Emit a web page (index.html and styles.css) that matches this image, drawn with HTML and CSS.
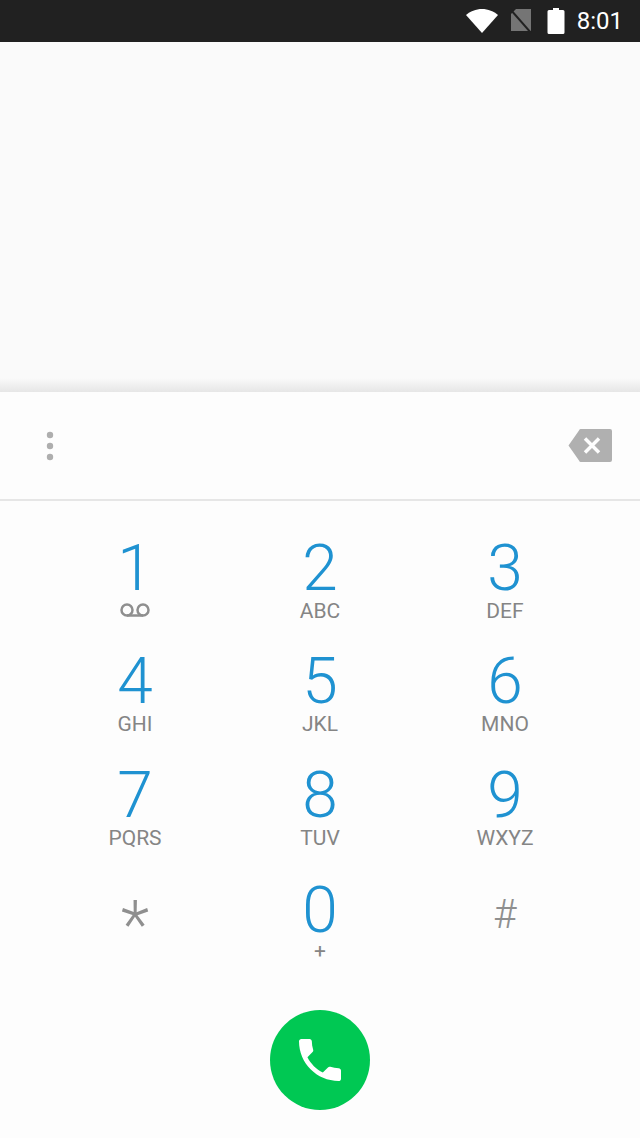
FILE: index.html
```html
<!DOCTYPE html>
<html lang="en">
<head>
<meta charset="utf-8">
<title>Dialer</title>
<link rel="stylesheet" href="styles.css">
</head>
<body>
<div class="phone">
  <header class="status">
    <svg class="ic-wifi" viewBox="0 0 32 24"><path d="M0 6C4 2.500 10 0 16 0s12 2.500 16 6L16 24z" fill="#fff"/></svg>
    <svg class="ic-sim" viewBox="0 0 22 26"><path d="M6 1h15v22H1V6z" fill="#757575"/><path d="M0 1l22 25" stroke="#212121" stroke-width="2"/></svg>
    <svg class="ic-batt" viewBox="0 0 18 26"><path d="M6 0h6v2h4a1.500 1.500 0 0 1 1.500 1.500V24.500A1.500 1.500 0 0 1 16 26H2a1.500 1.500 0 0 1-1.500-1.500V3.500A1.500 1.500 0 0 1 2 2h4z" fill="#fff"/></svg>
    <span class="clock">8:01</span>
  </header>
  <div class="results"></div>
  <section class="sheet">
    <div class="entry">
      <svg class="ic-more" viewBox="0 0 8 30"><circle cx="4" cy="4" r="3.200"/><circle cx="4" cy="15" r="3.200"/><circle cx="4" cy="26" r="3.200"/></svg>
      <svg class="ic-back" viewBox="0 0 44 33"><path d="M11 1.500a2 2 0 0 1 1.500-1.500H42a2 2 0 0 1 2 2V31a2 2 0 0 1-2 2H12.500a2 2 0 0 1-1.500-1.500L.5 16.500z" fill="#b0b0b0"/><path d="M17 9.500l14 14M31 9.500L17 23.500" stroke="#fdfdfd" stroke-width="3.500" fill="none"/></svg>
    </div>
    <div class="keys">
      <div class="key"><span class="num">1</span><svg class="ic-vm" viewBox="0 0 30 14"><circle cx="7" cy="7" r="5.500"/><circle cx="23" cy="7" r="5.500"/><path d="M7 12.500h16"/></svg></div>
      <div class="key"><span class="num">2</span><span class="sub">ABC</span></div>
      <div class="key"><span class="num">3</span><span class="sub">DEF</span></div>
      <div class="key"><span class="num">4</span><span class="sub">GHI</span></div>
      <div class="key"><span class="num">5</span><span class="sub">JKL</span></div>
      <div class="key"><span class="num">6</span><span class="sub">MNO</span></div>
      <div class="key"><span class="num">7</span><span class="sub">PQRS</span></div>
      <div class="key"><span class="num">8</span><span class="sub">TUV</span></div>
      <div class="key"><span class="num">9</span><span class="sub">WXYZ</span></div>
      <div class="key"><span class="num sym star">*</span></div>
      <div class="key"><span class="num zero">0</span><span class="sub">+</span></div>
      <div class="key"><span class="num sym hash">#</span></div>
    </div>
    <div class="call">
      <button class="call-btn" type="button" aria-label="Call">
        <svg class="ic-phone" viewBox="0 0 24 24"><path d="M6.620 10.790c1.440 2.830 3.760 5.140 6.590 6.590l2.200-2.200c.27-.27.67-.36 1.020-.24 1.120.37 2.330.57 3.570.57.550 0 1 .45 1 1V20c0 .55-.45 1-1 1-9.390 0-17-7.610-17-17 0-.55.450-1 1-1h3.500c.55 0 1 .45 1 1 0 1.250.2 2.450.57 3.570.11.350.03.740-.25 1.020l-2.200 2.200z" fill="#fff"/></svg>
      </button>
    </div>
  </section>
</div>
</body>
</html>
```
FILE: styles.css
```css
* { box-sizing: border-box; }
html, body { margin: 0; padding: 0; }
body { background: #fff; font-family: Roboto, "Liberation Sans", sans-serif; }
.phone { width: 640px; height: 1138px; display: flex; flex-direction: column; overflow: hidden; }
.status { height: 42px; background: #212121; display: flex; align-items: center; justify-content: flex-end; padding-right: 17px; flex: none; }
.ic-wifi { width: 32px; height: 24px; margin-right: 12px; }
.ic-sim { width: 22px; height: 26px; margin-right: 15px; }
.ic-batt { width: 18px; height: 26px; margin-right: 12px; }
.clock { color: #fff; font-size: 24px; line-height: 42px; }
.results { height: 350px; flex: none; background: linear-gradient(to bottom, #fafafa 0, #fafafa 336px, #e6e6e6 350px); }
.sheet { flex: 1; background: #fdfdfd; display: flex; flex-direction: column; }
.entry { height: 109px; flex: none; border-bottom: 2px solid #e6e6e6; display: flex; align-items: center; justify-content: space-between; padding: 0 28px 0 46px; }
.ic-more { width: 8px; height: 30px; fill: #aeaeae; }
.ic-back { width: 44px; height: 33px; }
.keys { display: grid; grid-template-columns: repeat(3, 185px); grid-auto-rows: 113.33px; justify-content: center; padding-top: 43px; flex: none; }
.key { display: flex; flex-direction: column; align-items: center; }
.num { font-size: 64px; font-weight: 300; line-height: 50px; height: 50px; color: #1f92d1; }
.zero { line-height: 54px; }
.sub { font-size: 21px; line-height: 20px; color: #858585; margin-top: 7px; }
.ic-vm { width: 30px; height: 14px; margin-top: 9px; fill: none; stroke: #8f8f8f; stroke-width: 2.500; }
.sym { color: #8f8f8f; }
.star { font-size: 66px; line-height: 84px; }
.hash { font-size: 40px; line-height: 62px; }
.call { display: flex; justify-content: center; padding-top: 13px; flex: none; }
.call-btn { width: 100px; height: 100px; border: 0; padding: 0; border-radius: 50%; background: #00c853; display: flex; align-items: center; justify-content: center; }
.ic-phone { width: 56px; height: 56px; }
```
